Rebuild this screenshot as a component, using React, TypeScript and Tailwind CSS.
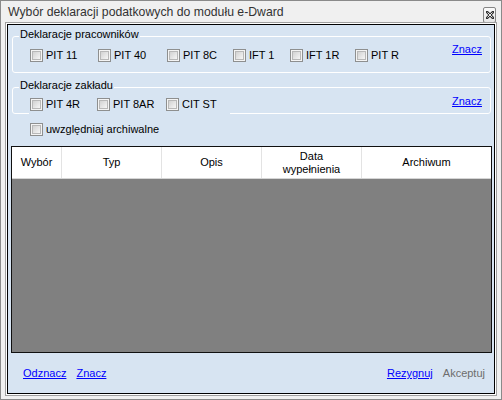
import React from "react";

function Cb({ label }: { label: string }) {
  return (
    <div className="flex items-center bg-[#d7e4f2]">
      <div className="w-[13px] h-[13px] border border-[#8e8f8f] bg-[#f4f4f4] p-[1px] shrink-0">
        <div className="w-full h-full border border-[#b8b8b8] bg-gradient-to-br from-[#d2d2d2] to-[#f6f6f6]" />
      </div>
      <span className="ml-[3px] text-black leading-none">{label}</span>
    </div>
  );
}

function Link({ children, cls }: { children: React.ReactNode; cls?: string }) {
  return <span className={"text-[#0000ff] underline " + (cls ?? "")}>{children}</span>;
}

export default function App() {
  return (
    <div className="w-[502px] h-[400px] bg-[#f0f0f0] border border-[#8a8a8a] flex flex-col font-['Liberation_Sans',Arial,sans-serif] text-[11px] text-black">
      {/* title bar */}
      <div className="h-[21px] flex items-center justify-between pl-[7px] pr-[5px] shrink-0">
        <span className="text-[12.25px] text-[#333] mt-[2px]">Wybór deklaracji podatkowych do modułu e-Dward</span>
        <div className="w-[13px] h-[16px] mt-[7px] border border-[#858585] rounded-[2px] bg-gradient-to-b from-[#fafafa] to-[#e6e6e6] flex items-center justify-center">
          <svg width="8" height="8" viewBox="0 0 8 8">
            <path d="M1 1 L7 7 M7 1 L1 7" stroke="#333" strokeWidth="2.6" strokeLinecap="square" />
            <path d="M1.5 1.5 L6.5 6.5 M6.5 1.5 L1.5 6.5" stroke="#fff" strokeWidth="0.9" />
          </svg>
        </div>
      </div>
      {/* client */}
      <div className="flex-1 mx-[4px] mb-[3px] border border-[#a0a0a0]">
        <div className="h-full border border-white">
          <div className="h-full border border-black bg-[#d7e4f2] flex flex-col relative">
            {/* group 1 */}
            <div className="mt-[11px] ml-[4px] w-[479px] h-[37px] border border-white rounded-[3px] relative">
              <span className="absolute -top-[8px] left-[6px] px-[1px] bg-[#d7e4f2] leading-none">Deklaracje pracowników</span>
              <div className="flex mt-[12px] ml-[17px] gap-0">
                <div className="w-[68px]"><Cb label="PIT 11" /></div>
                <div className="w-[69px]"><Cb label="PIT 40" /></div>
                <div className="w-[66px]"><Cb label="PIT 8C" /></div>
                <div className="w-[57px]"><Cb label="IFT 1" /></div>
                <div className="w-[65px]"><Cb label="IFT 1R" /></div>
                <div><Cb label="PIT R" /></div>
              </div>
              <Link cls="absolute right-[8px] top-[7px] leading-none">Znacz</Link>
            </div>
            {/* group 2 */}
            <div className="mt-[14px] ml-[4px] w-[479px] h-[27px] border border-white rounded-[3px] relative">
              <span className="absolute -top-[8px] left-[6px] px-[1px] bg-[#d7e4f2] leading-none">Deklaracje zakładu</span>
              <div className="flex mt-[10px] ml-[16px] w-[201px] bg-[#d7e4f2] h-[17px] items-start">
                <div className="w-[68px] pl-[1px]"><Cb label="PIT 4R" /></div>
                <div className="w-[69px]"><Cb label="PIT 8AR" /></div>
                <div><Cb label="CIT ST" /></div>
              </div>
              <Link cls="absolute right-[8px] top-[8px] leading-none">Znacz</Link>
            </div>
            <div className="mt-[9px] ml-[22px]">
              <Cb label="uwzględniaj archiwalne" />
            </div>
            {/* grid */}
            <div className="mt-[10px] ml-[3px] w-[481px] h-[207px] border border-[#101010] flex flex-col">
              <div className="h-[32px] bg-white flex border-b border-[#d5d5d5] shrink-0 text-center">
                <div className="w-[50px] border-r border-[#e3e3e3] flex items-center justify-center">Wybór</div>
                <div className="w-[100px] border-r border-[#e3e3e3] flex items-center justify-center">Typ</div>
                <div className="w-[100px] border-r border-[#e3e3e3] flex items-center justify-center">Opis</div>
                <div className="w-[100px] border-r border-[#e3e3e3] flex items-center justify-center leading-[13px]">Data<br />wypełnienia</div>
                <div className="flex-1 flex items-center justify-center">Archiwum</div>
              </div>
              <div className="flex-1 bg-[#808080]" />
            </div>
            {/* footer */}
            <div className="flex-1 flex items-center justify-between pl-[15px] pr-[9px] pt-[1px]">
              <div className="flex gap-[10px]">
                <Link>Odznacz</Link>
                <Link>Znacz</Link>
              </div>
              <div className="flex gap-[10px]">
                <Link>Rezygnuj</Link>
                <span className="text-[#6d6d6d]">Akceptuj</span>
              </div>
            </div>
          </div>
        </div>
      </div>
    </div>
  );
}
